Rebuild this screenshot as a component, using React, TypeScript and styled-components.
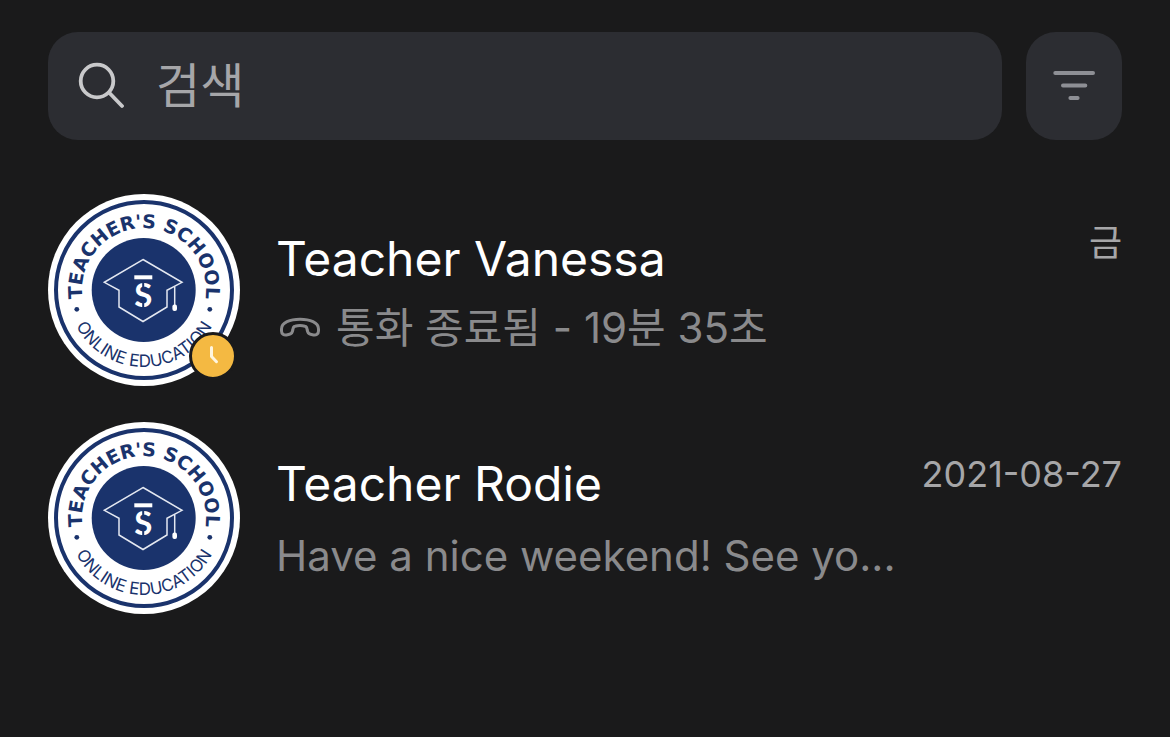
import React, { useId, useState } from "react";
import styled, { createGlobalStyle } from "styled-components";

const colors = {
  page: "#1a1a1b",
  field: "#2c2d32",
  navy: "#1a336c",
  white: "#ffffff",
  muted: "#8a8a8c",
  time: "#a6a6a8",
  placeholder: "#a6a6a9",
  away: "#f4b942",
};

const GlobalStyle = createGlobalStyle`
  * { box-sizing: border-box; }
  body {
    margin: 0;
    background: ${colors.page};
    font-family: Inter, "Noto Sans CJK KR", sans-serif;
  }
`;

const Page = styled.main`
  min-height: 100vh;
  padding: 32px 48px;
`;

const Toolbar = styled.form`
  display: flex;
  gap: 24px;
`;

const SearchField = styled.label`
  flex: 1;
  min-width: 0;
  display: flex;
  align-items: center;
  gap: 32px;
  height: 108px;
  padding: 0 28px;
  border-radius: 30px;
  background: ${colors.field};
`;

const SearchInput = styled.input`
  flex: 1;
  min-width: 0;
  padding: 0;
  border: 0;
  outline: 0;
  background: transparent;
  color: ${colors.white};
  font-family: inherit;
  font-size: 48px;
  line-height: 72px;

  &::placeholder {
    color: ${colors.placeholder};
    opacity: 1;
  }
`;

const FilterButton = styled.button`
  display: flex;
  align-items: center;
  justify-content: center;
  width: 96px;
  height: 108px;
  padding: 0;
  border: 0;
  border-radius: 30px;
  background: ${colors.field};
  cursor: pointer;
`;

const Icon = styled.svg`
  display: block;
  flex: none;
  fill: none;
  stroke-linecap: round;
  stroke-linejoin: round;
`;

const ChatList = styled.ul`
  display: flex;
  flex-direction: column;
  gap: 36px;
  margin: 54px 0 0;
  padding: 0;
  list-style: none;
`;

const ChatRow = styled.li`
  display: flex;
  gap: 36px;
`;

const AvatarFrame = styled.div`
  position: relative;
  flex: none;
  width: 192px;
  height: 192px;
`;

const AwayBadge = styled.span`
  position: absolute;
  right: 3px;
  bottom: 6px;
  width: 48px;
  height: 48px;
  border: 3px solid ${colors.page};
  border-radius: 50%;
  background: ${colors.away};
`;

const ChatText = styled.div<{ $tight: boolean }>`
  flex: 1;
  min-width: 0;
  display: flex;
  flex-direction: column;
  justify-content: flex-end;
  gap: ${(p) => (p.$tight ? 9 : 12)}px;
  padding-bottom: 28px;
`;

const Heading = styled.div`
  display: flex;
  justify-content: space-between;
  gap: 24px;
`;

const Name = styled.h2`
  margin: 0;
  color: ${colors.white};
  font-size: 48px;
  font-weight: 400;
  line-height: 60px;
`;

const Time = styled.time<{ $tight: boolean }>`
  color: ${colors.time};
  font-size: 36px;
  line-height: ${(p) => (p.$tight ? 28 : 40)}px;
`;

const Message = styled.p`
  display: flex;
  align-items: center;
  gap: 14px;
  margin: 0;
  color: ${colors.muted};
  font-size: 42px;
  line-height: 60px;
  white-space: nowrap;
`;

function SearchIcon() {
  return (
    <Icon width="48" height="48" viewBox="0 0 48 48" stroke="#c9c9cb" strokeWidth="3.8" aria-hidden="true">
      <circle cx="21" cy="19" r="16.3" />
      <path d="M33 30.5 46 44" />
    </Icon>
  );
}

function FilterIcon() {
  return (
    <Icon width="48" height="48" viewBox="0 0 48 48" stroke="#8e8f95" strokeWidth="4" aria-hidden="true">
      <path d="M5.3 11H43M13 23.4H35.3M20.4 36H27.6" />
    </Icon>
  );
}

function CallEndedIcon() {
  return (
    <Icon width="46" height="36" viewBox="-2 0 46 36" stroke={colors.muted} strokeWidth="3" aria-hidden="true">
      <path d="M3.5 19C3.5 12.5 12 9.3 22 9.3S40.5 12.5 40.5 19V21C40.5 24 38 25.5 35.5 25L32.5 24.3C30 23.7 29.5 22 29.2 20C29 17.5 28.5 16.5 27 16.2C24 15.5 20 15.5 17 16.2C15.5 16.5 15 17.5 14.8 20C14.5 22 14 23.7 11.5 24.3L8.5 25C6 25.5 3.5 24 3.5 21Z" />
    </Icon>
  );
}

function SchoolLogo() {
  const id = useId();
  return (
    <svg width="192" height="192" viewBox="0 0 192 192" role="img" aria-label="Teacher's School">
      <defs>
        <path id={`${id}top`} d="M96 158A62 62 0 0 1 96 34A62 62 0 0 1 96 158" />
        <path id={`${id}bottom`} d="M19 96A77 77 0 0 0 173 96" />
      </defs>
      <circle cx="96" cy="96" r="96" fill={colors.white} />
      <circle cx="96" cy="96" r="88" fill="none" stroke={colors.navy} strokeWidth="4" />
      <circle cx="95.7" cy="96" r="52" fill={colors.navy} />
      <g fill={colors.navy} textAnchor="middle">
        <text fontFamily="'DejaVu Sans', sans-serif" fontSize="19" fontWeight="700">
          <textPath href={`#${id}top`} startOffset="50%">TEACHER'S SCHOOL</textPath>
        </text>
        <text fontFamily="Inter, sans-serif" fontSize="17">
          <textPath href={`#${id}bottom`} startOffset="50%">ONLINE EDUCATION</textPath>
        </text>
        <circle cx="28.8" cy="115.3" r="2.4" />
        <circle cx="161.8" cy="115.3" r="2.4" />
      </g>
      <g fill="none" stroke="#e4e8f1" strokeWidth="1.5">
        <path d="M95 65.5 134 88.3 119 96.3V113L95 127.5 71 113V96.3L56.3 88.3Z" />
        <path d="M126.7 92.5V111" />
      </g>
      <rect x="124.4" y="110.5" width="4.6" height="6.6" rx="2" fill={colors.white} />
      <rect x="86.3" y="81.3" width="18" height="4" fill={colors.white} />
      <text x="95.2" y="112.5" fill={colors.white} fontFamily="Lato, sans-serif" fontSize="33" fontWeight="700" textAnchor="middle">
        S
      </text>
      <path d="M95.2 87V94M95.2 107V114" stroke={colors.navy} strokeWidth="2" />
    </svg>
  );
}

type Chat = {
  name: string;
  message: string;
  time: string;
  away?: boolean;
  call?: boolean;
};

const chats: Chat[] = [
  { name: "Teacher Vanessa", message: "통화 종료됨 - 19분 35초", time: "금", away: true, call: true },
  { name: "Teacher Rodie", message: "Have a nice weekend! See yo...", time: "2021-08-27" },
];

function ChatItem({ name, message, time, away = false, call = false }: Chat) {
  return (
    <ChatRow>
      <AvatarFrame>
        <SchoolLogo />
        {away && (
          <AwayBadge>
            <Icon width="42" height="42" viewBox="0 0 42 42" stroke="#fff6df" strokeWidth="3" aria-hidden="true">
              <path d="M19.5 12.5V21.5L24.5 26.7" />
            </Icon>
          </AwayBadge>
        )}
      </AvatarFrame>
      <ChatText $tight={call}>
        <Heading>
          <Name>{name}</Name>
          <Time $tight={call}>{time}</Time>
        </Heading>
        <Message>
          {call && <CallEndedIcon />}
          {message}
        </Message>
      </ChatText>
    </ChatRow>
  );
}

export default function App() {
  const [query, setQuery] = useState("");
  return (
    <>
      <GlobalStyle />
      <Page>
        <Toolbar role="search" onSubmit={(e) => e.preventDefault()}>
          <SearchField>
            <SearchIcon />
            <SearchInput
              type="text"
              placeholder="검색"
              aria-label="검색"
              value={query}
              onChange={(e) => setQuery(e.target.value)}
            />
          </SearchField>
          <FilterButton type="button" aria-label="필터">
            <FilterIcon />
          </FilterButton>
        </Toolbar>
        <ChatList>
          {chats.map((chat) => (
            <ChatItem key={chat.name} {...chat} />
          ))}
        </ChatList>
      </Page>
    </>
  );
}
